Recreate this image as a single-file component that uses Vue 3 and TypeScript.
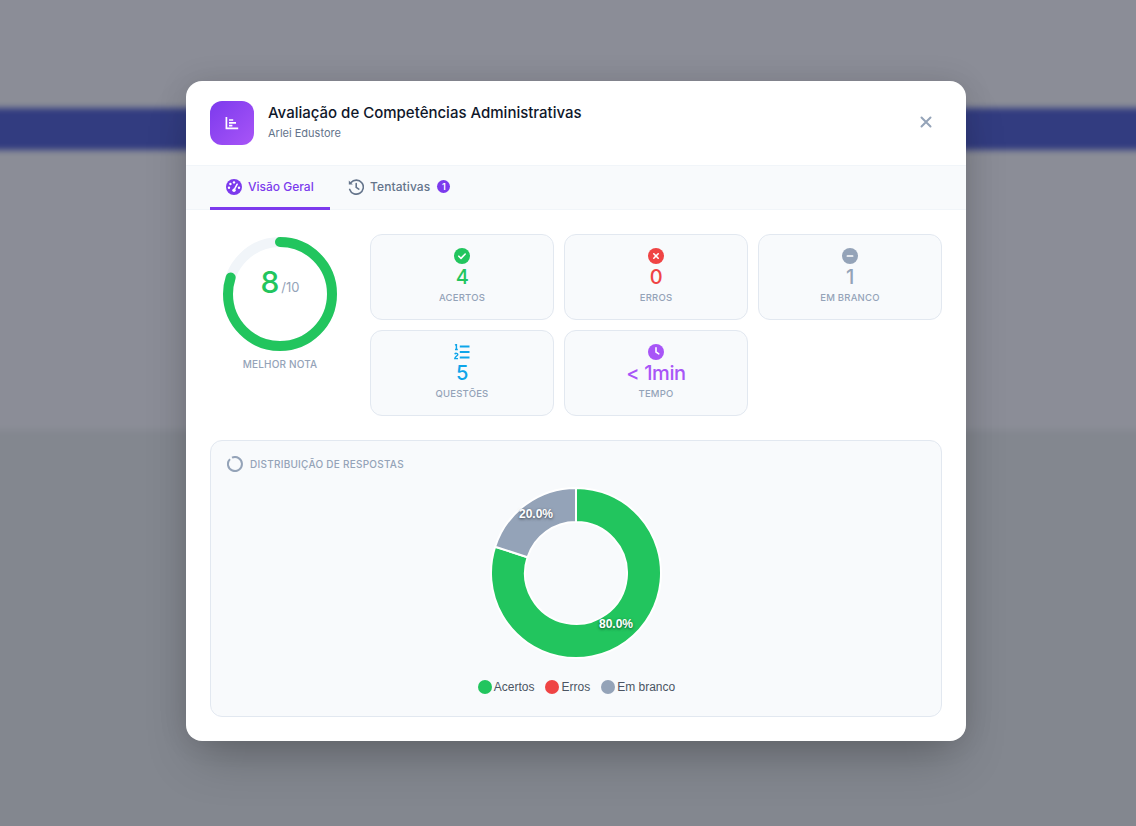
<script setup lang="ts">
const stats = [
  { key: "ok", value: "4", label: "Acertos", color: "#22c55e" },
  { key: "err", value: "0", label: "Erros", color: "#ef4444" },
  { key: "blank", value: "1", label: "Em branco", color: "#94a3b8" },
  { key: "list", value: "5", label: "Questões", color: "#0ea5e9" },
  { key: "time", value: "< 1min", label: "Tempo", color: "#a855f7" },
];

const legend = [
  { label: "Acertos", color: "#22c55e" },
  { label: "Erros", color: "#ef4444" },
  { label: "Em branco", color: "#94a3b8" },
];

// donut slice between two fractions of the turn, starting at 12 o'clock
function slice(from: number, to: number, r1 = 85, r2 = 51): string {
  const pt = (f: number, r: number) => {
    const a = f * Math.PI * 2 - Math.PI / 2;
    return `${(r * Math.cos(a)).toFixed(2)} ${(r * Math.sin(a)).toFixed(2)}`;
  };
  const large = to - from > 0.5 ? 1 : 0;
  return `M${pt(from, r1)}A${r1} ${r1} 0 ${large} 1 ${pt(to, r1)}L${pt(to, r2)}A${r2} ${r2} 0 ${large} 0 ${pt(from, r2)}Z`;
}

const ringLen = 2 * Math.PI * 52;
</script>

<template>
  <div class="page">
    <div class="backdrop">
      <div class="bd-top"></div>
      <div class="bd-band"></div>
      <div class="bd-mid"></div>
      <div class="bd-low"></div>
    </div>

    <div class="modal">
      <header class="head">
        <div class="logo">
          <svg width="16" height="16" viewBox="0 0 16 16" fill="none" stroke="#fff" stroke-width="1.7">
            <path d="M2.4 2v11.4h11.8" />
            <path d="M5 5h4.2M5 7.8h7M5 10.6h3.4" />
          </svg>
        </div>
        <div class="head-text">
          <h1>Avaliação de Competências Administrativas</h1>
          <p>Arlei Edustore</p>
        </div>
        <button class="close" aria-label="Fechar">
          <svg width="12" height="12" viewBox="0 0 12 12" stroke="#94a3b8" stroke-width="2" stroke-linecap="round">
            <path d="M1.5 1.5l9 9M10.5 1.5l-9 9" />
          </svg>
        </button>
      </header>

      <nav class="tabs">
        <a class="tab active">
          <svg width="16" height="16" viewBox="0 0 16 16">
            <circle cx="8" cy="8" r="8" fill="#7c3aed" />
            <circle cx="8" cy="3.4" r="1.2" fill="#fff" />
            <circle cx="4.4" cy="5" r="1.2" fill="#fff" />
            <circle cx="3" cy="8.8" r="1.2" fill="#fff" />
            <circle cx="13" cy="8.8" r="1.2" fill="#fff" />
            <circle cx="8" cy="11.2" r="1.7" fill="#fff" />
            <path d="M8 11.2l3.2-6" stroke="#fff" stroke-width="1.5" stroke-linecap="round" />
          </svg>
          Visão Geral
        </a>
        <a class="tab">
          <svg width="16" height="16" viewBox="0 0 16 16" fill="none" stroke="#64748b" stroke-width="1.6">
            <path d="M3 3.6A7 7 0 1 1 1.7 10.4" stroke-linecap="round" />
            <path d="M.8 1.6v4h4z" fill="#64748b" stroke="none" />
            <path d="M8.2 4.6v3.8l2.6 1.7" stroke-linecap="round" stroke-linejoin="round" />
          </svg>
          Tentativas
          <span class="count">1</span>
        </a>
      </nav>

      <main class="body">
        <section class="top">
          <div class="score">
            <div class="ring">
              <svg width="120" height="120" viewBox="0 0 120 120" fill="none">
                <circle cx="60" cy="60" r="52" stroke="#f1f5f9" stroke-width="10" />
                <circle
                  cx="60" cy="60" r="52" stroke="#22c55e" stroke-width="10" stroke-linecap="round"
                  transform="rotate(-90 60 60)"
                  :stroke-dasharray="`${ringLen * 0.8} ${ringLen}`"
                />
              </svg>
              <div class="ring-text"><b>8</b><span>/10</span></div>
            </div>
            <div class="score-label">Melhor nota</div>
          </div>

          <div class="cards">
            <div v-for="s in stats" :key="s.key" class="card">
              <svg v-if="s.key === 'ok'" class="ic" viewBox="0 0 16 16">
                <circle cx="8" cy="8" r="8" :fill="s.color" />
                <path d="M4.8 8.2l2.2 2.2 4.2-4.4" fill="none" stroke="#fff" stroke-width="1.6" stroke-linecap="round" stroke-linejoin="round" />
              </svg>
              <svg v-else-if="s.key === 'err'" class="ic" viewBox="0 0 16 16">
                <circle cx="8" cy="8" r="8" :fill="s.color" />
                <path d="M5.8 5.8l4.4 4.4M10.2 5.8l-4.4 4.4" fill="none" stroke="#fff" stroke-width="1.6" stroke-linecap="round" />
              </svg>
              <svg v-else-if="s.key === 'blank'" class="ic" viewBox="0 0 16 16">
                <circle cx="8" cy="8" r="8" :fill="s.color" />
                <path d="M5.4 8h5.2" fill="none" stroke="#fff" stroke-width="1.7" stroke-linecap="round" />
              </svg>
              <svg v-else-if="s.key === 'list'" class="ic" viewBox="0 0 16 16">
                <path d="M5.8 2.4h9.7M5.8 8h9.7M5.8 13.6h9.7" :stroke="s.color" stroke-width="2" fill="none" />
                <path d="M1 1.2l1.4-.7v5M1 5.5h2.8" :stroke="s.color" stroke-width="1.4" fill="none" />
                <path d="M.8 10.2c.4-1.2 3-1.2 3 .2 0 1.2-2.8 2.2-3 4.2h3.2" :stroke="s.color" stroke-width="1.4" fill="none" />
              </svg>
              <svg v-else class="ic" viewBox="0 0 16 16">
                <circle cx="8" cy="8" r="8" :fill="s.color" />
                <path d="M8 3.8V8l2.8 1.9" fill="none" stroke="#fff" stroke-width="1.6" stroke-linecap="round" stroke-linejoin="round" />
              </svg>
              <div class="val" :style="{ color: s.color }">{{ s.value }}</div>
              <div class="lab">{{ s.label }}</div>
            </div>
          </div>
        </section>

        <section class="dist">
          <div class="dist-head">
            <svg width="16" height="16" viewBox="0 0 16 16" fill="none" stroke="#94a3b8" stroke-width="2">
              <path d="M5 1.7A7 7 0 1 1 3 3.1" />
            </svg>
            <span>Distribuição de respostas</span>
          </div>

          <div class="chart">
            <svg width="172" height="172" viewBox="-86 -86 172 172">
              <path :d="slice(0, 0.8)" fill="#22c55e" stroke="#fff" stroke-width="2" stroke-linejoin="round" />
              <path :d="slice(0.8, 1)" fill="#94a3b8" stroke="#fff" stroke-width="2" stroke-linejoin="round" />
            </svg>
            <span class="pct pct-a">80.0%</span>
            <span class="pct pct-b">20.0%</span>
          </div>

          <ul class="legend">
            <li v-for="l in legend" :key="l.label">
              <i :style="{ background: l.color }"></i>{{ l.label }}
            </li>
          </ul>
        </section>
      </main>
    </div>
  </div>
</template>

<style>
html,
body {
  margin: 0;
  overflow: hidden;
}
</style>

<style scoped>
.page {
  position: relative;
  width: 1136px;
  height: 826px;
  overflow: hidden;
  background: #8b8d97;
  font-family: Inter, "Open Sans", sans-serif;
  padding-top: 81px;
  box-sizing: border-box;
}

.backdrop {
  position: absolute;
  inset: -10px;
  display: flex;
  flex-direction: column;
  filter: blur(3px);
}
.bd-top {
  height: 118px;
  background: #8b8d97;
}
.bd-band {
  height: 42px;
  background: #323c80;
}
.bd-mid {
  height: 280px;
  background: #8b8d97;
}
.bd-low {
  flex: 1;
  background: #83878f;
}

.modal {
  position: relative;
  width: 780px;
  height: 660px;
  margin-left: 186px;
  background: #fff;
  border-radius: 16px;
  overflow: hidden;
  box-shadow: 0 25px 50px -12px rgba(0, 0, 0, 0.25), 0 0 30px rgba(0, 0, 0, 0.1);
}

.head {
  display: flex;
  align-items: center;
  height: 85px;
  padding: 0 24px;
  box-sizing: border-box;
  border-bottom: 1px solid #f1f5f9;
}
.logo {
  width: 44px;
  height: 44px;
  border-radius: 12px;
  background: linear-gradient(135deg, #7c3aed, #a855f7);
  display: flex;
  align-items: center;
  justify-content: center;
  margin-right: 14px;
}
.head-text {
  flex: 1;
  padding-bottom: 3px;
}
.head-text h1 {
  margin: 0 0 1px;
  font-size: 15px;
  line-height: 22px;
  font-weight: 500;
  color: #0f172a;
}
.head-text p {
  margin: 0;
  font-size: 11px;
  line-height: 16px;
  color: #64748b;
}
.close {
  width: 32px;
  height: 32px;
  margin-bottom: 2px;
  border: 0;
  background: none;
  padding: 0;
  display: flex;
  align-items: center;
  justify-content: center;
}

.tabs {
  display: flex;
  height: 44px;
  box-sizing: border-box;
  padding: 0 24px;
  background: #f8fafc;
  border-bottom: 1px solid #f1f5f9;
}
.tab {
  display: flex;
  align-items: center;
  gap: 6px;
  height: 44px;
  box-sizing: border-box;
  padding: 0 16px;
  font-size: 12px;
  font-weight: 500;
  color: #64748b;
  border-bottom: 3px solid transparent;
}
.tab.active {
  color: #7c3aed;
  border-bottom-color: #7c3aed;
  width: 120px;
}
.tab:not(.active) {
  padding: 0 18px;
  letter-spacing: 0.1px;
}
.count {
  width: 13px;
  height: 13px;
  margin-left: 1px;
  border-radius: 50%;
  background: #7c3aed;
  color: #fff;
  font-size: 9px;
  font-weight: 600;
  display: flex;
  align-items: center;
  justify-content: center;
}

.body {
  padding: 24px;
}
.top {
  display: flex;
  gap: 20px;
  margin-bottom: 24px;
}
.score {
  width: 140px;
  flex: none;
  display: flex;
  flex-direction: column;
  align-items: center;
}
.ring {
  position: relative;
  width: 120px;
  height: 120px;
}
.ring-text {
  position: absolute;
  inset: 0 0 12px;
  display: flex;
  align-items: center;
  justify-content: center;
}
.ring-text b {
  font-size: 30px;
  font-weight: 500;
  color: #22c55e;
  margin: -12px 2px 0 0;
}
.ring-text span {
  font-size: 13px;
  color: #94a3b8;
  margin-top: -2px;
}
.score-label {
  margin-top: 3px;
  font-size: 10px;
  line-height: 15px;
  font-weight: 500;
  letter-spacing: 0.15px;
  text-transform: uppercase;
  color: #94a3b8;
}

.cards {
  flex: 1;
  display: grid;
  grid-template-columns: repeat(3, 1fr);
  grid-auto-rows: 86px;
  gap: 10px;
}
.card {
  display: flex;
  flex-direction: column;
  align-items: center;
  box-sizing: border-box;
  padding-top: 13px;
  background: #f8fafc;
  border: 1px solid #e2e8f0;
  border-radius: 12px;
}
.ic {
  width: 16px;
  height: 16px;
  display: block;
  margin-bottom: 1px;
}
.val {
  font-size: 20px;
  line-height: 24px;
  font-weight: 500;
  letter-spacing: -0.4px;
}
.lab {
  margin-top: 2px;
  font-size: 9.5px;
  line-height: 14px;
  font-weight: 500;
  letter-spacing: 0.2px;
  text-transform: uppercase;
  color: #94a3b8;
}

.dist {
  height: 277px;
  box-sizing: border-box;
  padding: 15px 16px 0;
  background: #f8fafc;
  border: 1px solid #e2e8f0;
  border-radius: 12px;
}
.dist-head {
  display: flex;
  align-items: center;
  gap: 7px;
  height: 16px;
  font-size: 10px;
  font-weight: 500;
  letter-spacing: 0.25px;
  text-transform: uppercase;
  color: #94a3b8;
}
.chart {
  position: relative;
  width: 172px;
  height: 172px;
  margin: 15px auto 0;
}
.chart svg {
  display: block;
}
.pct {
  position: absolute;
  transform: translate(-50%, -50%);
  font-family: "Liberation Sans", Arial, sans-serif;
  font-size: 12px;
  font-weight: 700;
  line-height: 14px;
  color: #fff;
  text-shadow: 0 1px 3px rgba(0, 0, 0, 0.6);
}
.pct-a {
  left: 126px;
  top: 137px;
}
.pct-b {
  left: 46px;
  top: 27px;
}
.legend {
  list-style: none;
  margin: 21px 0 0;
  padding: 0 0 0 1px;
  display: flex;
  justify-content: center;
  gap: 11px;
  font-family: "Liberation Sans", Arial, sans-serif;
  font-size: 12px;
  line-height: 14px;
  color: #4b5563;
}
.legend li {
  display: flex;
  align-items: center;
  gap: 2px;
}
.legend i {
  width: 14px;
  height: 14px;
  border-radius: 50%;
}
</style>
